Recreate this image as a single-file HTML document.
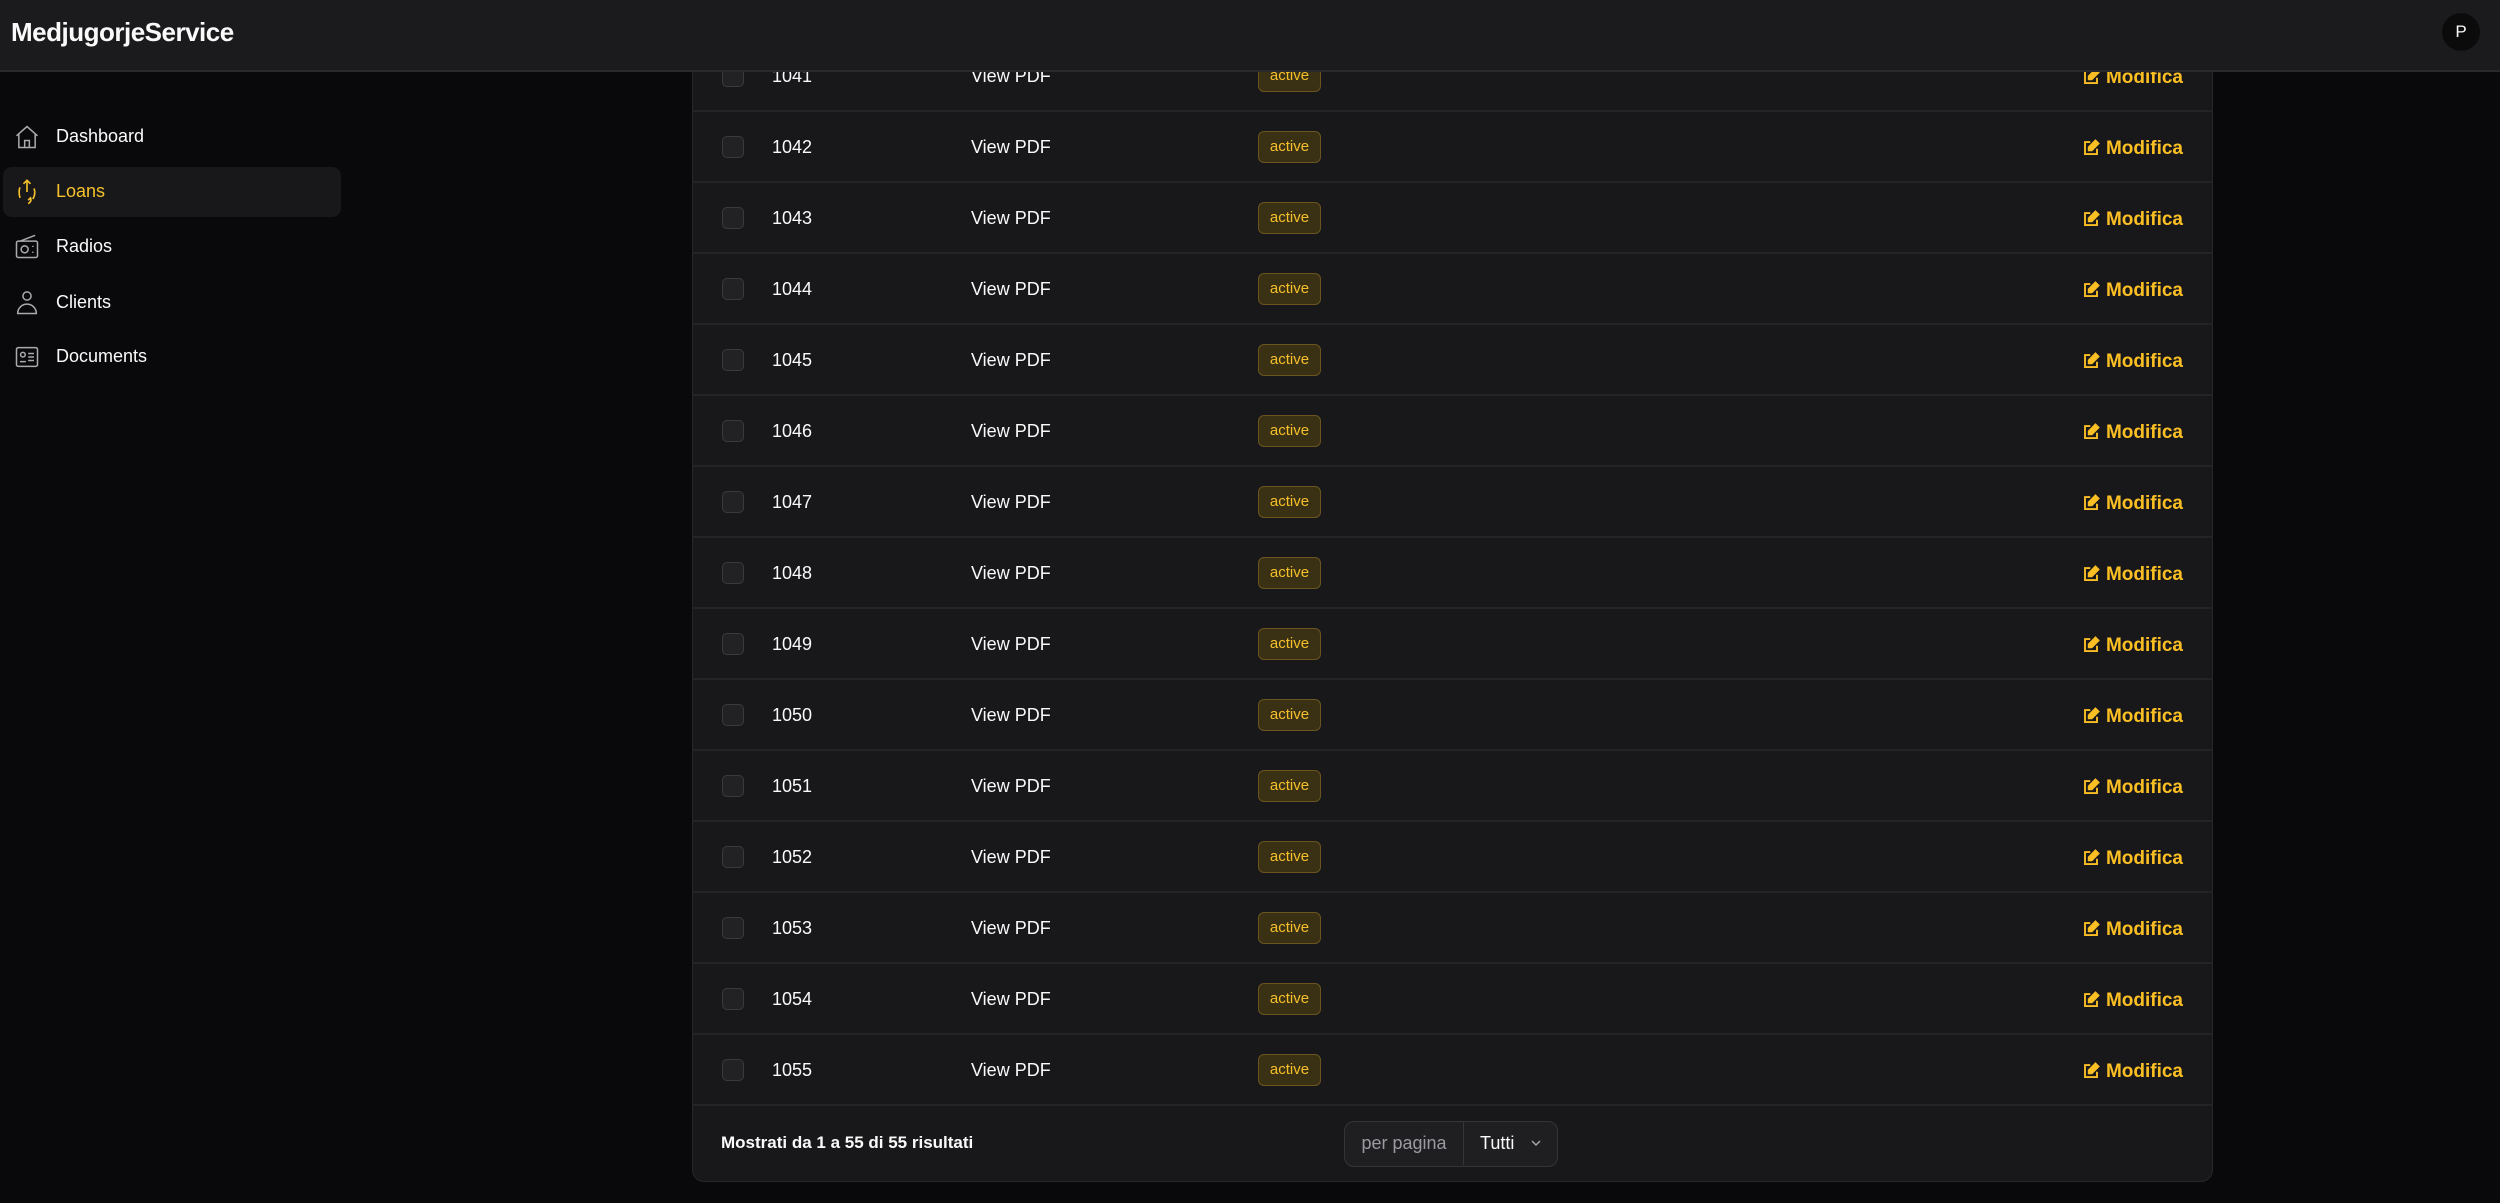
<!DOCTYPE html>
<html><head><meta charset="utf-8"><style>
*{box-sizing:border-box;margin:0;padding:0}
body{width:2500px;height:1203px;background:#09090b;font-family:"Liberation Sans",sans-serif;color:#fafafa;position:relative;overflow:hidden}
.hdr{position:absolute;left:0;top:0;width:2500px;height:72px;background:#1b1b1d;border-bottom:2px solid #2a2a2d;z-index:5}
.logo{position:absolute;left:11px;top:17px;font-size:26px;font-weight:700;letter-spacing:-0.5px}
.av{position:absolute;left:2442px;top:13px;width:38px;height:38px;border-radius:50%;background:#0b0b0c;font-size:17px;text-align:center;line-height:38px}
.nav{position:absolute;left:3px;width:338px;height:50px;border-radius:9px;font-size:18px;font-weight:400}
.nav svg{position:absolute;left:10px;top:11px}
.nav span{position:absolute;left:53px;top:14px}
.card{position:absolute;left:692px;top:20px;width:1521px;height:1162px;background:#18181b;border:1px solid #27272a;border-radius:12px}
.row{position:absolute;left:692px;width:1521px;height:71px;border-bottom:2px solid #242427;font-size:18px}
.cb{position:absolute;left:30px;top:24px;width:22px;height:22px;border:1.5px solid #3a3a3e;border-radius:5px;background:#222225}
.id{position:absolute;left:80px;top:25px}
.pdf{position:absolute;left:279px;top:25px}
.badge{position:absolute;left:566px;top:19px;width:63px;height:32px;border:1.5px solid #6a5520;background:#3a3014;border-radius:6px;color:#f5c02a;font-size:15px;text-align:center;line-height:29px}
.mod{position:absolute;right:30px;top:26px;color:#fbbf24;font-weight:700;font-size:19px}
.mod svg{vertical-align:-3px;margin-right:6px}
</style></head><body>
<div class="hdr"><div class="logo">MedjugorjeService</div><div class="av">P</div></div>

<div class="nav" style="top:112px;color:#fafafa"><svg width="28" height="28" viewBox="0 0 24 24" fill="none" stroke="#aaa" stroke-width="1.3"><path d="M3 11L12 3l9 8M5 9v12h14V9M10 21v-6h4v6"/></svg><span>Dashboard</span></div>
<div class="nav" style="top:167px;background:#18181b;color:#f5c02a"><svg width="28" height="28" viewBox="0 0 24 24" fill="none" stroke="#f5c02a" stroke-width="1.4"><path d="M12 2v10M9 5l3-3 3 3M6 8c-1 2-1 6 0 9M18 9c1 2 1 6-1 9M13 22c2-1 3-3 2-5l-2 2"/></svg><span>Loans</span></div>
<div class="nav" style="top:222px"><svg width="28" height="28" viewBox="0 0 24 24" fill="none" stroke="#aaa" stroke-width="1.3"><rect x="3" y="7" width="18" height="14" rx="1.5"/><path d="M6 7l13-5"/><circle cx="10" cy="14" r="3"/><path d="M17 11v1M17 16v1"/></svg><span>Radios</span></div>
<div class="nav" style="top:278px"><svg width="28" height="28" viewBox="0 0 24 24" fill="none" stroke="#aaa" stroke-width="1.3"><circle cx="12" cy="6" r="3.5"/><path d="M4 21c0-5 4-8 8-8s8 3 8 8z"/></svg><span>Clients</span></div>
<div class="nav" style="top:332px"><svg width="28" height="28" viewBox="0 0 24 24" fill="none" stroke="#aaa" stroke-width="1.3"><rect x="3" y="4" width="18" height="16" rx="1.5"/><circle cx="8.5" cy="10" r="2"/><path d="M6 16h5M13 9h5M13 12h5M13 15h5"/></svg><span>Documents</span></div>

<div class="card"></div>

<div class="row" style="top:41px"><div class="cb"></div><div class="id">1041</div><div class="pdf">View PDF</div><div class="badge">active</div><div class="mod"><svg width="18" height="18" viewBox="0 0 24 24" fill="none" stroke="#fbbf24" stroke-width="2.5"><path d="M11 4H4v16h16v-7"/><path d="M18 2l4 4-9 9H9v-4z" fill="#fbbf24"/></svg>Modifica</div></div>
<div class="row" style="top:112px"><div class="cb"></div><div class="id">1042</div><div class="pdf">View PDF</div><div class="badge">active</div><div class="mod"><svg width="18" height="18" viewBox="0 0 24 24" fill="none" stroke="#fbbf24" stroke-width="2.5"><path d="M11 4H4v16h16v-7"/><path d="M18 2l4 4-9 9H9v-4z" fill="#fbbf24"/></svg>Modifica</div></div>
<div class="row" style="top:183px"><div class="cb"></div><div class="id">1043</div><div class="pdf">View PDF</div><div class="badge">active</div><div class="mod"><svg width="18" height="18" viewBox="0 0 24 24" fill="none" stroke="#fbbf24" stroke-width="2.5"><path d="M11 4H4v16h16v-7"/><path d="M18 2l4 4-9 9H9v-4z" fill="#fbbf24"/></svg>Modifica</div></div>
<div class="row" style="top:254px"><div class="cb"></div><div class="id">1044</div><div class="pdf">View PDF</div><div class="badge">active</div><div class="mod"><svg width="18" height="18" viewBox="0 0 24 24" fill="none" stroke="#fbbf24" stroke-width="2.5"><path d="M11 4H4v16h16v-7"/><path d="M18 2l4 4-9 9H9v-4z" fill="#fbbf24"/></svg>Modifica</div></div>
<div class="row" style="top:325px"><div class="cb"></div><div class="id">1045</div><div class="pdf">View PDF</div><div class="badge">active</div><div class="mod"><svg width="18" height="18" viewBox="0 0 24 24" fill="none" stroke="#fbbf24" stroke-width="2.5"><path d="M11 4H4v16h16v-7"/><path d="M18 2l4 4-9 9H9v-4z" fill="#fbbf24"/></svg>Modifica</div></div>
<div class="row" style="top:396px"><div class="cb"></div><div class="id">1046</div><div class="pdf">View PDF</div><div class="badge">active</div><div class="mod"><svg width="18" height="18" viewBox="0 0 24 24" fill="none" stroke="#fbbf24" stroke-width="2.5"><path d="M11 4H4v16h16v-7"/><path d="M18 2l4 4-9 9H9v-4z" fill="#fbbf24"/></svg>Modifica</div></div>
<div class="row" style="top:467px"><div class="cb"></div><div class="id">1047</div><div class="pdf">View PDF</div><div class="badge">active</div><div class="mod"><svg width="18" height="18" viewBox="0 0 24 24" fill="none" stroke="#fbbf24" stroke-width="2.5"><path d="M11 4H4v16h16v-7"/><path d="M18 2l4 4-9 9H9v-4z" fill="#fbbf24"/></svg>Modifica</div></div>
<div class="row" style="top:538px"><div class="cb"></div><div class="id">1048</div><div class="pdf">View PDF</div><div class="badge">active</div><div class="mod"><svg width="18" height="18" viewBox="0 0 24 24" fill="none" stroke="#fbbf24" stroke-width="2.5"><path d="M11 4H4v16h16v-7"/><path d="M18 2l4 4-9 9H9v-4z" fill="#fbbf24"/></svg>Modifica</div></div>
<div class="row" style="top:609px"><div class="cb"></div><div class="id">1049</div><div class="pdf">View PDF</div><div class="badge">active</div><div class="mod"><svg width="18" height="18" viewBox="0 0 24 24" fill="none" stroke="#fbbf24" stroke-width="2.5"><path d="M11 4H4v16h16v-7"/><path d="M18 2l4 4-9 9H9v-4z" fill="#fbbf24"/></svg>Modifica</div></div>
<div class="row" style="top:680px"><div class="cb"></div><div class="id">1050</div><div class="pdf">View PDF</div><div class="badge">active</div><div class="mod"><svg width="18" height="18" viewBox="0 0 24 24" fill="none" stroke="#fbbf24" stroke-width="2.5"><path d="M11 4H4v16h16v-7"/><path d="M18 2l4 4-9 9H9v-4z" fill="#fbbf24"/></svg>Modifica</div></div>
<div class="row" style="top:751px"><div class="cb"></div><div class="id">1051</div><div class="pdf">View PDF</div><div class="badge">active</div><div class="mod"><svg width="18" height="18" viewBox="0 0 24 24" fill="none" stroke="#fbbf24" stroke-width="2.5"><path d="M11 4H4v16h16v-7"/><path d="M18 2l4 4-9 9H9v-4z" fill="#fbbf24"/></svg>Modifica</div></div>
<div class="row" style="top:822px"><div class="cb"></div><div class="id">1052</div><div class="pdf">View PDF</div><div class="badge">active</div><div class="mod"><svg width="18" height="18" viewBox="0 0 24 24" fill="none" stroke="#fbbf24" stroke-width="2.5"><path d="M11 4H4v16h16v-7"/><path d="M18 2l4 4-9 9H9v-4z" fill="#fbbf24"/></svg>Modifica</div></div>
<div class="row" style="top:893px"><div class="cb"></div><div class="id">1053</div><div class="pdf">View PDF</div><div class="badge">active</div><div class="mod"><svg width="18" height="18" viewBox="0 0 24 24" fill="none" stroke="#fbbf24" stroke-width="2.5"><path d="M11 4H4v16h16v-7"/><path d="M18 2l4 4-9 9H9v-4z" fill="#fbbf24"/></svg>Modifica</div></div>
<div class="row" style="top:964px"><div class="cb"></div><div class="id">1054</div><div class="pdf">View PDF</div><div class="badge">active</div><div class="mod"><svg width="18" height="18" viewBox="0 0 24 24" fill="none" stroke="#fbbf24" stroke-width="2.5"><path d="M11 4H4v16h16v-7"/><path d="M18 2l4 4-9 9H9v-4z" fill="#fbbf24"/></svg>Modifica</div></div>
<div class="row" style="top:1035px"><div class="cb"></div><div class="id">1055</div><div class="pdf">View PDF</div><div class="badge">active</div><div class="mod"><svg width="18" height="18" viewBox="0 0 24 24" fill="none" stroke="#fbbf24" stroke-width="2.5"><path d="M11 4H4v16h16v-7"/><path d="M18 2l4 4-9 9H9v-4z" fill="#fbbf24"/></svg>Modifica</div></div>

<div style="position:absolute;left:721px;top:1133px;font-size:17px;font-weight:700">Mostrati da 1 a 55 di 55 risultati</div>
<div style="position:absolute;left:1344px;top:1121px;width:214px;height:46px;border:1.5px solid #34343a;border-radius:10px;background:#1f1f22;font-size:18px">
<div style="position:absolute;left:0;top:0;width:119px;height:43px;border-right:1.5px solid #34343a;color:#9a9aa0;text-align:center;line-height:43px">per pagina</div>
<div style="position:absolute;left:135px;top:0;line-height:43px;color:#fafafa">Tutti</div>
<svg style="position:absolute;left:185px;top:16px" width="12" height="10" viewBox="0 0 12 10" fill="none" stroke="#aaa" stroke-width="1.4"><path d="M2 3l4 4 4-4"/></svg>
</div>
</body></html>
